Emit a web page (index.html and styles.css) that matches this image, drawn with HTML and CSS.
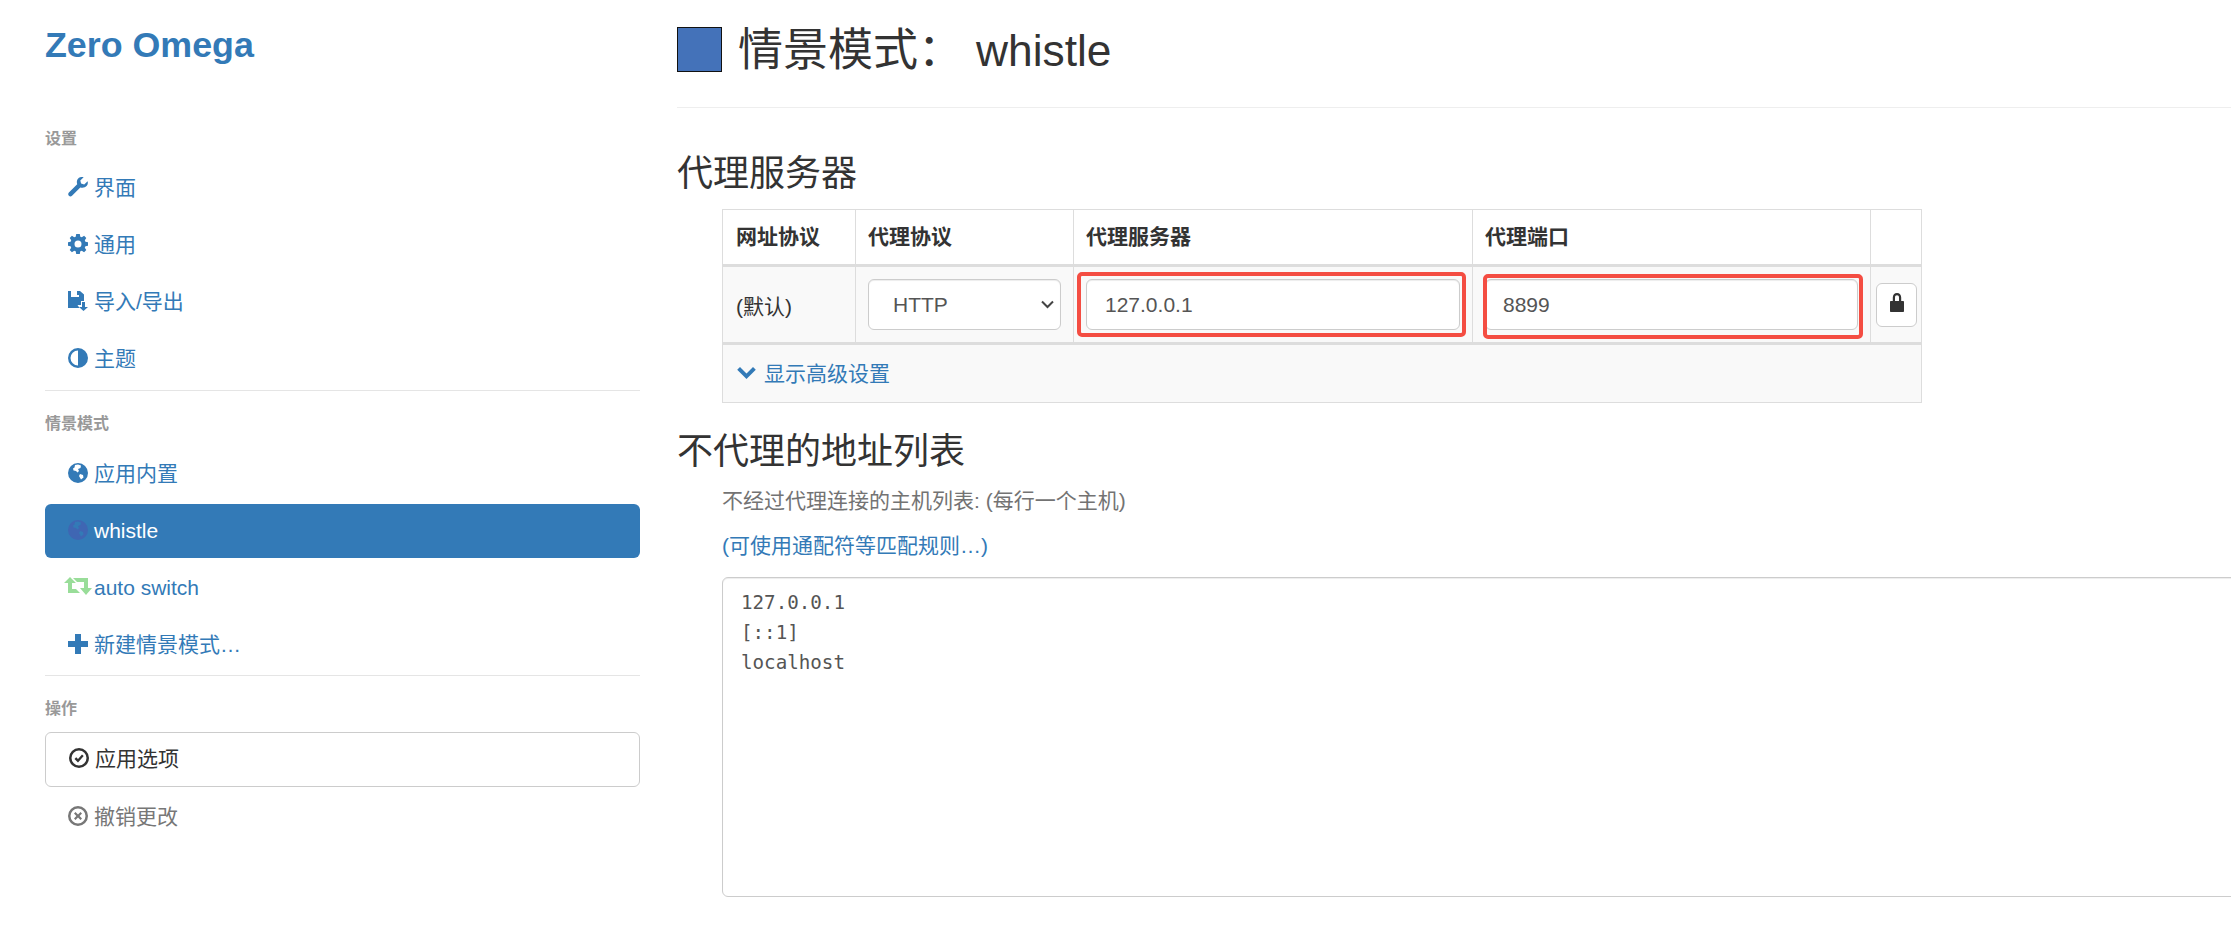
FILE: index.html
```html
<!DOCTYPE html>
<html lang="zh-CN">
<head>
    <meta charset="UTF-8" />
    <title>Zero Omega</title>
    <link rel="stylesheet" href="styles.css">
</head>
<body>
<svg class="icon-defs" aria-hidden="true">
    <symbol id="i-wrench" viewBox="0 0 20 20"><path d="M19.6 4.2l-3.4 3.2-3.1-.9-.8-3.1L15.6.2C13.2-.5 10.400.4 9.300 2.800c-.6 1.400-.6 3-.1 4.400L.9 15.600c-.9.9-.9 2.300 0 3.100.9.900 2.200.900 3.100 0l8.300-8.300c1.400.5 3 .5 4.400-.1 2.500-1.100 3.700-3.600 2.900-6.100z"/></symbol>
    <symbol id="i-cog" viewBox="0 0 20 20"><path fill-rule="evenodd" d="M8.200 0h3.600l.5 2.700 1.500.6 2.300-1.600 2.200 2.300-1.500 2.200.6 1.600 2.600.5v3.400l-2.600.5-.6 1.600 1.500 2.200-2.200 2.300-2.300-1.600-1.500.6-.5 2.700H8.200l-.5-2.700-1.500-.6-2.300 1.600-2.200-2.300 1.500-2.200-.6-1.600-2.600-.5V8.300l2.600-.5.6-1.600-1.500-2.200 2.200-2.300 2.300 1.600 1.500-.6zM10 6.500a3.500 3.500 0 1 0 0 7 3.500 3.500 0 0 0 0-7z"/></symbol>
    <symbol id="i-save" viewBox="0 0 20 20"><path d="M0 0h3v6h8V0h1l4 3.500V10h-3v4H9.500l2 3H0z"/><path d="M9 0h2v4H9z"/><path d="M14 11h3v5h3l-4.500 4-4.500-4h3z"/></symbol>
    <symbol id="i-adjust" viewBox="0 0 20 20"><path fill-rule="evenodd" d="M10 0a10 10 0 1 1 0 20 10 10 0 0 1 0-20zm0 2.500a7.500 7.500 0 0 0 0 15z"/></symbol>
    <symbol id="i-globe" viewBox="0 0 20 20"><path fill-rule="evenodd" d="M10 0a10 10 0 1 1 0 20 10 10 0 0 1 0-20zM7 2l-.5 2.500L5 5.500l.5 2 2.500.5 1.500 1.500L11 8l-1-2 2.500-1L13 2.500 10 1.500zM12 11l-1 2 2 3.500 2.500-2-.5-2.500z"/></symbol>
    <symbol id="i-retweet" viewBox="0 0 28 20"><path d="M6 0l6 6H8v6h4l4 4H4V6H0zM9 1h15v10h4l-6 7-6-7h4V5H13z"/></symbol>
    <symbol id="i-plus" viewBox="0 0 20 20"><path d="M7 0h6v7h7v6h-7v7H7v-7H0V7h7z"/></symbol>
    <symbol id="i-ok" viewBox="0 0 20 20"><path fill-rule="evenodd" d="M10 0a10 10 0 1 1 0 20 10 10 0 0 1 0-20zm0 2.500a7.500 7.500 0 1 0 0 15 7.500 7.500 0 0 0 0-15z"/><path d="M9 14.500L5.500 11l1.700-1.700L9 11l4-4.500 1.700 1.600z"/></symbol>
    <symbol id="i-remove" viewBox="0 0 20 20"><path fill-rule="evenodd" d="M10 0a10 10 0 1 1 0 20 10 10 0 0 1 0-20zm0 2.500a7.500 7.500 0 1 0 0 15 7.500 7.500 0 0 0 0-15z"/><path d="M7.500 6L10 8.400 12.500 6 14 7.500 11.600 10l2.400 2.500-1.500 1.500L10 11.600 7.500 14 6 12.500 8.400 10 6 7.500z"/></symbol>
    <symbol id="i-lock" viewBox="0 0 14 19"><path fill-rule="evenodd" d="M7 0c2.600 0 4.200 1.800 4.200 4.500V8H13c.6 0 1 .4 1 1v9c0 .6-.4 1-1 1H1c-.6 0-1-.4-1-1V9c0-.6.4-1 1-1h1.800V4.500C2.800 1.800 4.400 0 7 0zm0 2.200c-1.200 0-2 .9-2 2.300V8h4V4.500c0-1.400-.8-2.300-2-2.300z"/></symbol>
    <symbol id="i-chevron" viewBox="0 0 20 14"><path d="M3 0l7 7 7-7 3 3-10 10L0 3z"/></symbol>
</svg>

<div class="page">
    <nav class="sidebar">
        <a class="brand" href="#">Zero Omega</a>

        <div class="nav-label nav-label-first">设置</div>
        <a class="nav-item" href="#"><svg class="icon"><use href="#i-wrench"/></svg>界面</a>
        <a class="nav-item" href="#"><svg class="icon"><use href="#i-cog"/></svg>通用</a>
        <a class="nav-item" href="#"><svg class="icon"><use href="#i-save"/></svg>导入/导出</a>
        <a class="nav-item" href="#"><svg class="icon"><use href="#i-adjust"/></svg>主题</a>
        <div class="nav-divider"></div>

        <div class="nav-label">情景模式</div>
        <a class="nav-item" href="#"><svg class="icon"><use href="#i-globe"/></svg>应用内置</a>
        <a class="nav-item nav-latin active" href="#"><svg class="icon icon-profile"><use href="#i-globe"/></svg>whistle</a>
        <a class="nav-item nav-latin" href="#"><svg class="icon icon-switch"><use href="#i-retweet"/></svg>auto switch</a>
        <a class="nav-item" href="#"><svg class="icon"><use href="#i-plus"/></svg>新建情景模式…</a>
        <div class="nav-divider nav-divider-tight"></div>

        <div class="nav-label">操作</div>
        <a class="nav-item nav-apply" href="#"><svg class="icon"><use href="#i-ok"/></svg>应用选项</a>
        <a class="nav-item nav-undo" href="#"><svg class="icon"><use href="#i-remove"/></svg>撤销更改</a>
    </nav>

    <main class="content">
        <header class="page-header">
            <span class="profile-color"></span>
            <h1>情景模式：<span class="profile-name">whistle</span></h1>
        </header>

        <h3 class="section-first">代理服务器</h3>
        <table class="proxy-table">
            <colgroup>
                <col class="col-scheme">
                <col class="col-protocol">
                <col class="col-server">
                <col class="col-port">
                <col class="col-lock">
            </colgroup>
            <thead>
                <tr>
                    <th>网址协议</th>
                    <th>代理协议</th>
                    <th>代理服务器</th>
                    <th>代理端口</th>
                    <th></th>
                </tr>
            </thead>
            <tbody>
                <tr class="row-default">
                    <td>(默认)</td>
                    <td>
                        <select class="field">
                            <option>HTTP</option>
                        </select>
                    </td>
                    <td class="marked">
                        <input class="field field-server" type="text" value="127.0.0.1" />
                        <span class="mark mark-server"></span>
                    </td>
                    <td class="marked">
                        <input class="field" type="text" value="8899" />
                        <span class="mark mark-port"></span>
                    </td>
                    <td class="cell-lock">
                        <button class="lock-btn"><svg class="icon-lock"><use href="#i-lock"/></svg></button>
                    </td>
                </tr>
                <tr class="row-advanced">
                    <td colspan="5">
                        <a href="#"><svg class="icon-chevron"><use href="#i-chevron"/></svg>显示高级设置</a>
                    </td>
                </tr>
            </tbody>
        </table>

        <h3 class="section-bypass">不代理的地址列表</h3>
        <p class="help">不经过代理连接的主机列表: (每行一个主机)</p>
        <p class="wildcard"><a href="#">(可使用通配符等匹配规则…)</a></p>
        <textarea class="bypass-list" spellcheck="false">127.0.0.1
[::1]
localhost</textarea>
    </main>
</div>
</body>
</html>
```

FILE: styles.css
```css
html, body {
    margin: 0;
    height: 100%;
    overflow: hidden;
}

body {
    font-family: "Liberation Sans", "Noto Sans CJK SC", sans-serif;
    font-size: 21px;
    color: #333;
    background-color: #fff;
}

a {
    color: #337ab7;
    text-decoration: none;
}

.icon-defs {
    display: none;
}

.page {
    display: flex;
    padding-left: 45px;
    gap: 37px;
}

/* sidebar */

.sidebar {
    flex: 0 0 595px;
    width: 595px;
}

.brand {
    display: block;
    margin-top: 20px;
    height: 50px;
    line-height: 50px;
    font-size: 35.8px;
    font-weight: bold;
}

.nav-label {
    height: 22px;
    line-height: 22px;
    margin: 22px 0 12px;
    font-size: 16px;
    font-weight: bold;
    color: #999;
}

.nav-label-first {
    margin: 58px 0 11px;
}

.nav-item {
    display: flex;
    align-items: center;
    height: 54px;
    margin-bottom: 3px;
    padding-left: 23px;
    padding-bottom: 5px;
    border-radius: 6px;
    box-sizing: border-box;
}

.nav-latin {
    padding-bottom: 0;
}

.icon {
    flex: none;
    width: 20px;
    height: 20px;
    margin-right: 6px;
    margin-top: 2px;
    fill: currentColor;
}

.icon-profile {
    color: #3f66b3;
    margin-top: -2px;
}

.icon-switch {
    width: 28px;
    margin-left: -4px;
    margin-right: 2px;
    margin-top: -2px;
    color: #99dd99;
}

.nav-item.active {
    background-color: #337ab7;
    color: #fff;
}

.nav-divider {
    height: 1px;
    margin-top: 4px;
    background-color: #e5e5e5;
}

.nav-divider-tight {
    margin-top: 3px;
}

.nav-apply {
    height: 55px;
    color: #333;
    border: 1px solid #ccc;
    margin-bottom: 2px;
}

.nav-undo {
    padding-bottom: 3px;
    color: #777;
}

/* main */

.content {
    flex: 1;
    min-width: 0;
    overflow: hidden;
    height: 945px;
}

.page-header {
    display: flex;
    align-items: flex-start;
    margin-top: 27px;
    padding-bottom: 34px;
    border-bottom: 1px solid #eee;
}

.profile-color {
    flex: none;
    width: 43px;
    height: 43px;
    margin-right: 16px;
    background-color: #4472b9;
    border: 1px solid #111;
}

h1 {
    margin: 1px 0 0;
    font-size: 45px;
    font-weight: normal;
    line-height: 45px;
}

.profile-name {
    margin-left: 13px;
    font-size: 44.3px;
}

h3 {
    height: 46px;
    margin: 0;
    font-size: 36px;
    font-weight: normal;
    line-height: 46px;
}

.section-first {
    margin-top: 43px;
    margin-bottom: 12px;
}

.section-bypass {
    margin-top: 26px;
}

.proxy-table {
    width: 1200px;
    margin-left: 45px;
    table-layout: fixed;
    border-collapse: collapse;
}

.col-scheme { width: 133px; }
.col-protocol { width: 218px; }
.col-server { width: 399px; }
.col-port { width: 398px; }
.col-lock { width: 51px; }

.proxy-table th,
.proxy-table td {
    padding: 0 12px;
    border: 1px solid #ddd;
    text-align: left;
}

.proxy-table th {
    height: 56px;
    padding-bottom: 4px;
    box-sizing: border-box;
    border-bottom: 3px solid #ddd;
    font-weight: bold;
}

.proxy-table th:first-child {
    padding-left: 13px;
}

.row-default td {
    height: 75px;
    background-color: #f9f9f9;
    border-bottom: 3px solid #ddd;
}

.row-default td:first-child {
    padding-left: 13px;
}

.row-advanced td {
    height: 53px;
    padding-bottom: 4px;
    padding-left: 14px;
    background-color: #f9f9f9;
}

.row-advanced a {
    display: flex;
    align-items: center;
}

.icon-chevron {
    width: 19px;
    height: 13px;
    margin-right: 8px;
    margin-top: 3px;
    fill: currentColor;
}

.field {
    display: block;
    width: 100%;
    height: 51px;
    box-sizing: border-box;
    padding: 0 17px;
    font-family: inherit;
    font-size: 21px;
    color: #555;
    background-color: #fff;
    border: 1px solid #ccc;
    border-radius: 6px;
    box-shadow: inset 0 1px 1px rgba(0, 0, 0, 0.075);
}

.field-server {
    padding-left: 18px;
}

select.field {
    padding-left: 24px;
    appearance: none;
    background-image: url("data:image/svg+xml,%3Csvg xmlns='http://www.w3.org/2000/svg' width='13' height='9'%3E%3Cpath d='M1 1.500l5.500 5.500L12 1.500' fill='none' stroke='%23444' stroke-width='2'/%3E%3C/svg%3E");
    background-repeat: no-repeat;
    background-position: right 6px center;
}

.marked {
    position: relative;
}

.mark {
    position: absolute;
    box-sizing: border-box;
    border: 4px solid #f44d42;
    border-radius: 5px;
    pointer-events: none;
}

.mark-server {
    left: 3px;
    top: 5px;
    width: 389px;
    height: 65px;
}

.mark-port {
    left: 10px;
    top: 7px;
    width: 380px;
    height: 65px;
}

.row-default .cell-lock {
    padding: 0 5px;
}

.lock-btn {
    display: flex;
    align-items: center;
    justify-content: center;
    width: 41px;
    height: 44px;
    padding: 0 0 5px;
    background-color: #fff;
    border: 1px solid #ccc;
    border-radius: 6px;
}

.icon-lock {
    width: 14px;
    height: 19px;
    fill: #333;
}

.help {
    margin: 11px 0 0 45px;
    line-height: 30px;
    color: #737373;
}

.wildcard {
    margin: 15px 0 0 45px;
    line-height: 30px;
}

.bypass-list {
    display: block;
    width: 1700px;
    height: 320px;
    margin: 16px 0 0 45px;
    padding: 10px 18px;
    box-sizing: border-box;
    font-family: "DejaVu Sans Mono", monospace;
    font-size: 19.2px;
    line-height: 30px;
    color: #555;
    border: 1px solid #ccc;
    border-radius: 6px;
    box-shadow: inset 0 1px 1px rgba(0, 0, 0, 0.075);
    resize: none;
    outline: none;
}
```
